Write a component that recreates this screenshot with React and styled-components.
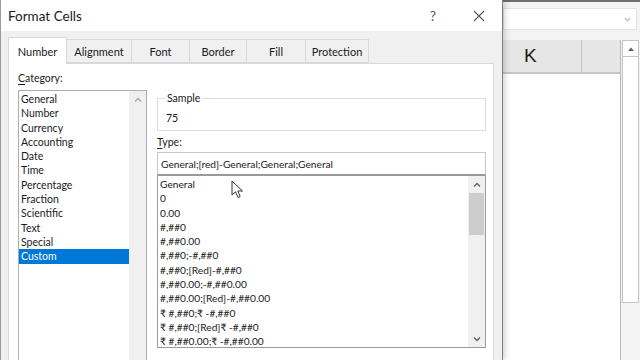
import React from 'react';
import styled, { createGlobalStyle } from 'styled-components';

const GlobalStyle = createGlobalStyle`
    html, body {
        margin: 0;
        padding: 0;
        overflow: hidden;
        background: #f3f3f3;
    }
    * {
        box-sizing: border-box;
    }
`;

const Screen = styled.div`
    display: flex;
    width: 640px;
    height: 360px;
    overflow: hidden;
    font-family: Lato, 'Noto Sans', sans-serif;
    color: #1a1a1a;
`;

// dialog

const Dialog = styled.div`
    display: flex;
    flex-direction: column;
    width: 503px;
    height: 360px;
    background: #f0f0f0;
    border-left: 1px solid #9a9a9a;
    border-right: 1px solid #7f7f7f;
    box-shadow: 2px 0 6px rgba(0, 0, 0, 0.18);
    position: relative;
    z-index: 2;
`;

const TitleBar = styled.div`
    display: flex;
    align-items: center;
    height: 31px;
    flex-shrink: 0;
    background: #ffffff;
    padding-left: 7px;
    font-size: 13.5px;
`;

const Title = styled.div`
    flex: 1;
`;

const TitleButton = styled.div`
    display: flex;
    align-items: center;
    justify-content: center;
    width: 46px;
    height: 31px;
    color: #555;
    font-size: 14px;
`;

const Body = styled.div`
    display: flex;
    flex-direction: column;
    flex: 1;
    padding: 5px 8px 0 7px;
    min-height: 0;
`;

const TabRow = styled.div`
    display: flex;
    align-items: flex-end;
    height: 27px;
    flex-shrink: 0;
`;

const Tab = styled.div`
    display: flex;
    align-items: center;
    justify-content: center;
    width: ${(p) => p.$w}px;
    height: ${(p) => (p.$active ? 27 : 24)}px;
    margin-bottom: ${(p) => (p.$active ? -1 : 0)}px;
    background: ${(p) => (p.$active ? '#ffffff' : '#f0f0f0')};
    border: 1px solid #d9d9d9;
    border-bottom: ${(p) => (p.$active ? 'none' : '1px solid #d9d9d9')};
    border-left: ${(p) => (p.$first ? '1px solid #d9d9d9' : 'none')};
    font-size: 11px;
    position: relative;
    z-index: ${(p) => (p.$active ? 1 : 0)};
`;

const Panel = styled.div`
    flex: 1;
    display: grid;
    grid-template-columns: 129px 1fr;
    column-gap: 10px;
    background: #ffffff;
    border: 1px solid #d9d9d9;
    border-bottom: none;
    padding: 7px 7px 0 9px;
    min-height: 0;
`;

const Column = styled.div`
    display: flex;
    flex-direction: column;
    padding-top: ${(p) => p.$pt || 0}px;
    min-height: 0;
`;

const Label = styled.div`
    font-size: 10.5px;
    height: ${(p) => p.$h}px;
    padding-top: ${(p) => p.$pt || 0}px;
    flex-shrink: 0;
    line-height: 15px;

    u {
        text-decoration-thickness: 1px;
        text-underline-offset: 2px;
    }
`;

const ListBox = styled.div`
    display: flex;
    flex: ${(p) => (p.$grow ? 1 : 'none')};
    height: ${(p) => (p.$h ? `${p.$h}px` : 'auto')};
    border: 1px solid ${(p) => p.$border || '#adadad'};
    border-bottom: ${(p) => (p.$open ? 'none' : undefined)};
    background: #ffffff;
    min-height: 0;
`;

const Items = styled.div`
    flex: 1;
    padding-top: ${(p) => p.$pt || 1}px;
    overflow: hidden;
`;

const Item = styled.div`
    height: 14.3px;
    line-height: 14.3px;
    padding-left: 2px;
    font-size: ${(p) => p.$fs || 10.5}px;
    white-space: nowrap;
    background: ${(p) => (p.$selected ? '#0078d7' : 'transparent')};
    color: ${(p) => (p.$selected ? '#ffffff' : '#1a1a1a')};
`;

const ScrollBar = styled.div`
    display: flex;
    flex-direction: column;
    width: 17px;
    background: #f0f0f0;
    flex-shrink: 0;
`;

const ScrollArrow = styled.div`
    display: flex;
    align-items: center;
    justify-content: center;
    height: 17px;
    flex-shrink: 0;
`;

const ScrollThumb = styled.div`
    height: ${(p) => p.$h}px;
    margin: 0 1px;
    background: #cdcdcd;
    flex-shrink: 0;
`;

const Spacer = styled.div`
    flex: 1;
`;

const Group = styled.fieldset`
    margin: 0;
    height: 39px;
    padding: 0 0 0 8px;
    border: 1px solid #dcdcdc;
    font-size: 10.5px;
    flex-shrink: 0;

    legend {
        padding: 0 2px;
        margin-left: -1px;
        font-size: 10.5px;
        line-height: 12px;
    }
`;

const SampleValue = styled.div`
    padding-top: 8px;
    font-size: 10.5px;
`;

const TypeInput = styled.div`
    height: 23px;
    flex-shrink: 0;
    display: flex;
    align-items: center;
    padding-left: 3px;
    border: 1px solid #c8c8c8;
    border-bottom: 1px solid #9a9a9a;
    font-size: 10.2px;
    white-space: nowrap;
`;

const Cursor = styled.svg`
    position: absolute;
    left: 230px;
    top: 180px;
    z-index: 5;
`;

// excel side

const Sheet = styled.div`
    flex: 1;
    display: flex;
    flex-direction: column;
    background: #f3f3f3;
    border-top: 2px solid #6e6e6e;
`;

const NameBox = styled.div`
    display: flex;
    align-items: center;
    justify-content: flex-end;
    height: 22px;
    margin: 6px 3px 0 0;
    background: #ffffff;
    border: 1px solid #e2e2e2;
    padding-right: 5px;
`;

const SheetGrid = styled.div`
    flex: 1;
    display: flex;
    margin-top: 10px;
`;

const CellsArea = styled.div`
    width: 118px;
    display: flex;
    flex-direction: column;
    border-right: 1px solid #b8b8b8;
`;

const ColHeader = styled.div`
    display: flex;
    height: 34px;
    background: #e6e6e6;
    border-bottom: 2px solid #c6c6c6;
`;

const ColCell = styled.div`
    width: ${(p) => p.$w}px;
    display: flex;
    align-items: center;
    justify-content: flex-start;
    font-family: 'Liberation Sans', Arial, sans-serif;
    font-size: 19px;
    border-right: ${(p) => (p.$sep ? '1px solid #c6c6c6' : 'none')};
    padding-left: ${(p) => p.$pl || 0}px;
`;

const Cells = styled.div`
    flex: 1;
    background: #ffffff;
`;

const VScroll = styled.div`
    width: 17px;
    margin-left: 1px;
    display: flex;
    flex-direction: column;
`;

const VTrack = styled.div`
    height: 263px;
    background: #ffffff;
    border: 1px solid #c4c4c4;
    display: flex;
    flex-direction: column;
`;

const VArrow = styled.div`
    height: 16px;
    display: flex;
    align-items: center;
    justify-content: center;
    border-bottom: 1px solid #c4c4c4;
`;

const Chevron = ({ dir = 'up', color = '#606060', size = 8 }) => (
    <svg width={size} height={size} viewBox="0 0 8 8">
        <path
            d={dir === 'up' ? 'M1 5.5 L4 2.5 L7 5.5' : 'M1 2.5 L4 5.5 L7 2.5'}
            fill="none"
            stroke={color}
            strokeWidth="1.3"
        />
    </svg>
);

const categories = [
    'General',
    'Number',
    'Currency',
    'Accounting',
    'Date',
    'Time',
    'Percentage',
    'Fraction',
    'Scientific',
    'Text',
    'Special',
    'Custom',
];

const types = [
    'General',
    '0',
    '0.00',
    '#,##0',
    '#,##0.00',
    '#,##0;-#,##0',
    '#,##0;[Red]-#,##0',
    '#,##0.00;-#,##0.00',
    '#,##0.00;[Red]-#,##0.00',
    '₹ #,##0;₹ -#,##0',
    '₹ #,##0;[Red]₹ -#,##0',
    '₹ #,##0.00;₹ -#,##0.00',
];

const tabs = [
    { name: 'Number', w: 59 },
    { name: 'Alignment', w: 65 },
    { name: 'Font', w: 58 },
    { name: 'Border', w: 57 },
    { name: 'Fill', w: 59 },
    { name: 'Protection', w: 63 },
];

const App = () => {
    return (
        <Screen>
            <GlobalStyle />
            <Dialog>
                <TitleBar>
                    <Title>Format Cells</Title>
                    <TitleButton>?</TitleButton>
                    <TitleButton>
                        <svg width="12" height="12" viewBox="0 0 12 12">
                            <path d="M1 1 L11 11 M11 1 L1 11" stroke="#555" strokeWidth="1.1" />
                        </svg>
                    </TitleButton>
                </TitleBar>
                <Body>
                    <TabRow>
                        {tabs.map((t, i) => (
                            <Tab key={t.name} $w={t.w} $active={i === 0} $first={i === 0}>
                                {t.name}
                            </Tab>
                        ))}
                    </TabRow>
                    <Panel>
                        <Column>
                            <Label $h={19}>
                                <u>C</u>ategory:
                            </Label>
                            <ListBox $grow $open>
                                <Items $pt={1}>
                                    {categories.map((c) => (
                                        <Item key={c} $selected={c === 'Custom'}>
                                            {c}
                                        </Item>
                                    ))}
                                </Items>
                                <ScrollBar>
                                    <ScrollArrow>
                                        <Chevron color="#a8a8a8" />
                                    </ScrollArrow>
                                </ScrollBar>
                            </ListBox>
                        </Column>
                        <Column $pt={21}>
                            <Group>
                                <legend>Sample</legend>
                                <SampleValue>75</SampleValue>
                            </Group>
                            <Label $h={21} $pt={4}>
                                <u>T</u>ype:
                            </Label>
                            <TypeInput>General;[red]-General;General;General</TypeInput>
                            <ListBox $h={173} $border="#9a9a9a">
                                <Items $pt={1}>
                                    {types.map((t) => (
                                        <Item key={t} $fs={10.2}>
                                            {t}
                                        </Item>
                                    ))}
                                </Items>
                                <ScrollBar>
                                    <ScrollArrow>
                                        <Chevron />
                                    </ScrollArrow>
                                    <ScrollThumb $h={42} />
                                    <Spacer />
                                    <ScrollArrow>
                                        <Chevron dir="down" />
                                    </ScrollArrow>
                                </ScrollBar>
                            </ListBox>
                        </Column>
                    </Panel>
                </Body>
                <Cursor width="14" height="20" viewBox="0 0 14 20">
                    <path
                        d="M1 1 L1 15 L4.5 11.8 L7 17.5 L9.2 16.5 L6.8 11 L11.5 11 Z"
                        fill="#ffffff"
                        stroke="#333"
                        strokeWidth="1"
                        strokeLinejoin="round"
                    />
                </Cursor>
            </Dialog>
            <Sheet>
                <NameBox>
                    <Chevron dir="down" color="#b0b0b0" size={7} />
                </NameBox>
                <SheetGrid>
                    <CellsArea>
                        <ColHeader>
                            <ColCell $w={79} $sep $pl={21}>
                                K
                            </ColCell>
                            <ColCell $w={38} />
                        </ColHeader>
                        <Cells />
                    </CellsArea>
                    <VScroll>
                        <VTrack>
                            <VArrow>
                                <svg width="8" height="6" viewBox="0 0 8 6">
                                    <path d="M1 5 L4 1.5 L7 5 Z" fill="#606060" />
                                </svg>
                            </VArrow>
                        </VTrack>
                    </VScroll>
                </SheetGrid>
            </Sheet>
        </Screen>
    );
};

export default App;
